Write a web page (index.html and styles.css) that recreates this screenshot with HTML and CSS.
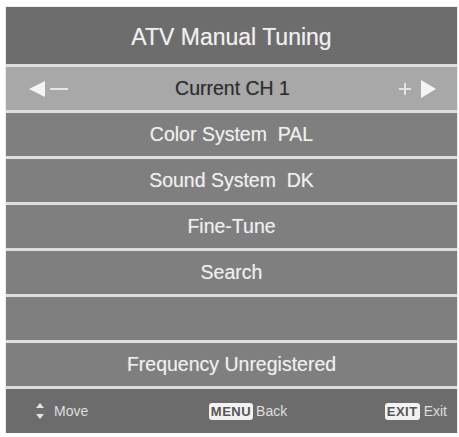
FILE: index.html
```html
<!DOCTYPE html>
<html>
<head>
<meta charset="utf-8">
<link rel="stylesheet" href="styles.css">
</head>
<body>
<div class="panel">
  <div class="title">ATV Manual Tuning</div>
  <div class="row current">
    <span class="adj left">
      <svg width="40" height="18" viewBox="0 0 40 18"><polygon points="1,9 17,1 17,17" fill="#f4f4f4"/><rect x="22" y="8" width="18" height="2" fill="#e6e6e6"/></svg>
    </span>
    <span class="label">Current CH 1</span>
    <span class="adj right">
      <svg width="38" height="20" viewBox="0 0 38 20"><rect x="0" y="9" width="12" height="2" fill="#e2e2e2"/><rect x="5" y="4" width="2" height="12" fill="#e2e2e2"/><polygon points="22,1 37,10 22,19" fill="#f4f4f4"/></svg>
    </span>
  </div>
  <div class="row">Color System&nbsp;&nbsp;PAL</div>
  <div class="row">Sound System&nbsp;&nbsp;DK</div>
  <div class="row">Fine-Tune</div>
  <div class="row">Search</div>
  <div class="row"></div>
  <div class="row">Frequency Unregistered</div>
  <div class="footer">
    <span class="hint move">
      <svg width="10" height="18" viewBox="0 0 10 18"><polygon points="5,1 9,6 1,6" fill="#e4e4e4"/><polygon points="1,12 9,12 5,17" fill="#e4e4e4"/></svg>
      Move
    </span>
    <span class="hint menu"><span class="key">MENU</span>Back</span>
    <span class="hint exit"><span class="key">EXIT</span>Exit</span>
  </div>
</div>
</body>
</html>
```
FILE: styles.css
```css
html, body {
  margin: 0;
  padding: 0;
  background: #ffffff;
}
body {
  font-family: "Liberation Sans", Arial, sans-serif;
}
.panel {
  margin: 7px 0 0 6px;
  width: 451px;
  display: flex;
  flex-direction: column;
  gap: 3px;
  background: #dedede;
  box-shadow: 0 0 0 1px #ececec;
}
.title {
  height: 57px;
  background: #6e6d6e;
  color: #f0f0f0;
  font-size: 23px;
  display: flex;
  align-items: center;
  justify-content: center;
  padding-top: 3px;
  box-sizing: border-box;
  text-shadow: 0 0 1px rgba(255,255,255,0.4);
}
.row {
  height: 43px;
  background: #807f80;
  color: #efefef;
  font-size: 19.5px;
  display: flex;
  align-items: center;
  justify-content: center;
  text-shadow: 0 0 1px rgba(255,255,255,0.4);
}
.row.current {
  background: #a9a8a9;
  color: #2e2e2e;
  justify-content: space-between;
  padding: 0 20px 0 22px;
  text-shadow: 0 0 1px rgba(0,0,0,0.3);
}
.adj {
  display: flex;
  align-items: center;
  width: 40px;
}
.adj.right {
  justify-content: flex-end;
}
.footer {
  height: 44px;
  background: #6d6c6d;
  color: #dedede;
  font-size: 14px;
  display: flex;
  align-items: center;
  justify-content: space-between;
  padding: 0 10px 0 29px;
}
.hint {
  display: flex;
  align-items: center;
  gap: 3px;
}
.move {
  gap: 9px;
  width: 150px;
}
.menu {
  margin-left: 14px;
}
.exit {
  width: 150px;
  justify-content: flex-end;
  gap: 4px;
}
.key {
  background: #f2f2f2;
  color: #555555;
  font-weight: bold;
  font-size: 13px;
  padding: 1px 2px;
  border-radius: 3px;
  line-height: 15px;
  letter-spacing: 0.5px;
}
```
